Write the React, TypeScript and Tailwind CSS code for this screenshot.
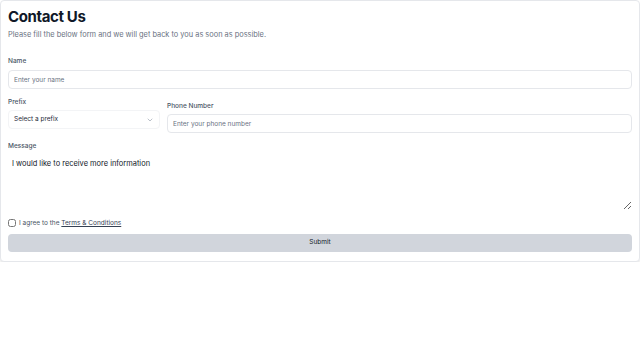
import { ChevronDown } from 'lucide-react';

function App() {
  return (
    <div className="font-['Inter','Liberation_Sans',sans-serif] text-gray-900">
      <div className="rounded border border-gray-200 bg-white px-[7px] pt-[5px] pb-[9px] shadow-md">
        <h1 className="text-[15px] font-bold leading-[22px] tracking-tight">Contact Us</h1>
        <p className="mt-[1px] text-[7.4px] leading-[12px] text-gray-500">
          Please fill the below form and we will get back to you as soon as possible.
        </p>

        <form className="mt-[15px] flex flex-col">
          <label className="text-[6.5px] font-medium leading-[10px] text-gray-600">Name</label>
          <input
            type="text"
            placeholder="Enter your name"
            className="mt-[4px] h-[19px] w-full rounded border border-gray-200 px-[5px] text-[6.5px] placeholder:text-gray-500 focus:outline-none"
          />

          <div className="mt-[8px] flex gap-[7px]">
            <div className="flex w-[152px] shrink-0 flex-col">
              <label className="text-[6.5px] font-medium leading-[10px] text-gray-600">Prefix</label>
              <button
                type="button"
                className="mt-[3px] flex h-[19px] items-center justify-between rounded border border-gray-100 px-[5px] text-[6.5px] text-gray-800"
              >
                Select a prefix
                <ChevronDown className="h-[8px] w-[8px] text-gray-400" strokeWidth={2} />
              </button>
            </div>
            <div className="flex flex-1 flex-col pt-[4px]">
              <label className="text-[6.5px] font-medium leading-[10px] text-gray-600">Phone Number</label>
              <input
                type="text"
                placeholder="Enter your phone number"
                className="mt-[3px] h-[19px] w-full rounded border border-gray-200 px-[5px] text-[6.5px] placeholder:text-gray-500 focus:outline-none"
              />
            </div>
          </div>

          <label className="mt-[8px] text-[6.5px] font-medium leading-[10px] text-gray-600">Message</label>
          <textarea
            defaultValue="I would like to receive more information"
            className="mt-[4px] h-[55px] w-full resize-y px-[4px] py-[3px] text-[7.45px] leading-[12px] text-gray-900 focus:outline-none"
          />

          <div className="mt-[8px] flex items-center gap-[3px]">
            <input type="checkbox" className="h-[8px] w-[8px] rounded-sm border-gray-400" />
            <span className="text-[6.5px] leading-[10px] text-gray-600">
              I agree to the <a className="text-gray-700 underline">Terms &amp; Conditions</a>
            </span>
          </div>

          <button
            type="button"
            className="mt-[6px] h-[18px] w-full rounded bg-gray-300 text-[6.5px] text-gray-900"
          >
            Submit
          </button>
        </form>
      </div>
    </div>
  );
}

export default App;
